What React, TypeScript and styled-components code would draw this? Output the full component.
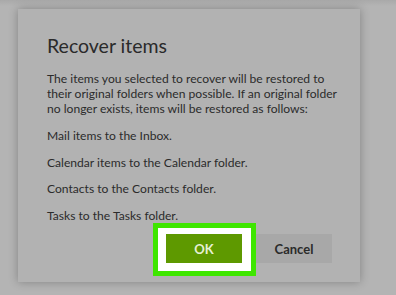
import React from "react";
import styled, { createGlobalStyle } from "styled-components";

const GlobalStyle = createGlobalStyle`
  html, body {
    margin: 0;
    padding: 0;
    width: 396px;
    height: 295px;
    overflow: hidden;
    background: #b5b5b5;
  }
  body {
    font-family: Lato, "Noto Sans", sans-serif;
  }
`;

const Backdrop = styled.div`
  width: 396px;
  height: 295px;
  padding: 9px 0 0 18px;
  box-sizing: border-box;
  background: linear-gradient(#a9a9a9 0, #b4b4b4 6px);
`;

const Dialog = styled.div`
  width: 342px;
  height: 273px;
  box-sizing: border-box;
  background: #b2b2b2;
  box-shadow: 0 0 9px rgba(0, 0, 0, 0.28);
  padding: 24px 0 0 29px;
  display: flex;
  flex-direction: column;
  color: #2b2b2b;
`;

const Title = styled.h1`
  margin: 0 0 12px;
  font-size: 19.5px;
  font-weight: 400;
  line-height: 26px;
  color: #2a2a2a;
`;

const Para = styled.p`
  margin: 0 0 11.8px;
  font-size: 12.1px;
  line-height: 15px;
  white-space: nowrap;
`;

const Actions = styled.div`
  display: flex;
  align-items: flex-start;
  margin-top: -11.5px;
  margin-left: 106px;
`;

const Highlight = styled.div`
  border: 5px solid #3ee600;
  background: #ffffff;
  padding: 6px 9px 8px 8px;
  display: flex;
`;

const Button = styled.button<{ $primary?: boolean }>`
  width: 76px;
  height: 29px;
  border: none;
  padding: 0;
  font-family: inherit;
  font-size: 13px;
  font-weight: 700;
  cursor: pointer;
  background: ${(p) => (p.$primary ? "#5e9900" : "#a8a8a8")};
  color: ${(p) => (p.$primary ? "#e6f0d4" : "#2b2b2b")};
`;

const CancelWrap = styled.div`
  margin-top: 11px;
`;

export default function App() {
  return (
    <>
      <GlobalStyle />
      <Backdrop>
        <Dialog>
          <Title>Recover items</Title>
          <Para>
            The items you selected to recover will be restored to
            <br />
            their original folders when possible. If an original folder
            <br />
            no longer exists, items will be restored as follows:
          </Para>
          <Para>Mail items to the Inbox.</Para>
          <Para>Calendar items to the Calendar folder.</Para>
          <Para>Contacts to the Contacts folder.</Para>
          <Para>Tasks to the Tasks folder.</Para>
          <Actions>
            <Highlight>
              <Button $primary>OK</Button>
            </Highlight>
            <CancelWrap>
              <Button>Cancel</Button>
            </CancelWrap>
          </Actions>
        </Dialog>
      </Backdrop>
    </>
  );
}
